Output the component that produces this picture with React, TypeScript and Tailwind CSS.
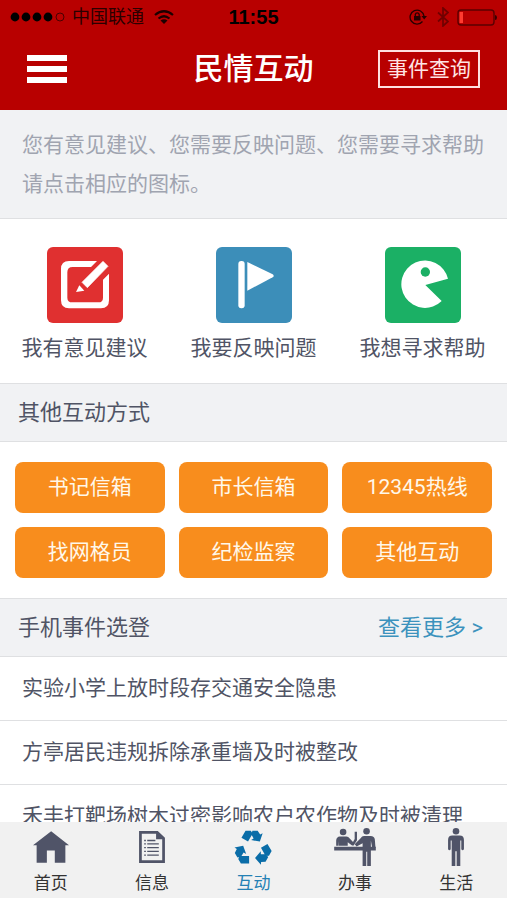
import type { ReactNode } from 'react'

const actions = [
    { label: '我有意见建议', icon: <EditIcon /> },
    { label: '我要反映问题', icon: <FlagIcon /> },
    { label: '我想寻求帮助', icon: <HelpIcon /> },
]

const channels = ['书记信箱', '市长信箱', '12345热线', '找网格员', '纪检监察', '其他互动']

const events = [
    '实验小学上放时段存交通安全隐患',
    '方亭居民违规拆除承重墙及时被整改',
    '禾丰打靶场树木过密影响农户农作物及时被清理',
]

const tabs = [
    { label: '首页', icon: <HomeIcon /> },
    { label: '信息', icon: <DocIcon /> },
    { label: '互动', icon: <RecycleIcon />, active: true },
    { label: '办事', icon: <ServiceIcon /> },
    { label: '生活', icon: <PersonIcon /> },
]

function EditIcon() {
    return (
        <svg viewBox="0 0 228 228" className="h-19 w-19 rounded-md bg-[#e03030]" aria-hidden="true">
            <path d="M150 42H66Q42 42 42 66V160Q42 184 66 184H162Q186 184 186 160V80L168 98V152Q168 166 154 166H76Q61 166 61 152V76Q61 60 77 60H132Z" fill="#fff" />
            <path d="M168 43L183 58L121 122L105 106Z" fill="#fff" stroke="#fff" strokeWidth="2" strokeLinejoin="round" />
            <path d="M97 115L112 131L87 135Z" fill="#fff" />
        </svg>
    )
}

function FlagIcon() {
    return (
        <svg viewBox="0 0 228 228" className="h-19 w-19 rounded-md bg-[#3c8eb9]" aria-hidden="true">
            <rect x="67" y="42" width="19" height="142" rx="9" fill="#fff" />
            <path d="M94 45L170 82Q176 87 170 91L94 131Z" fill="#fff" />
        </svg>
    )
}

function HelpIcon() {
    return (
        <svg viewBox="0 0 228 228" className="h-19 w-19 rounded-md bg-[#1bb065]" aria-hidden="true">
            <path d="M121 114L189 95A71 71 0 1 0 170 162Z" fill="#fff" />
            <circle cx="121" cy="75" r="14" fill="#1bb065" />
        </svg>
    )
}

function HomeIcon() {
    return (
        <svg viewBox="0 0 109 95" className="h-8 w-9" fill="currentColor" aria-hidden="true">
            <path d="M55 0L109 42H98V95H66V58H42V95H11V42H0Z" />
        </svg>
    )
}

function DocIcon() {
    return (
        <svg viewBox="0 0 76 94" className="h-8 w-[26px]" fill="currentColor" aria-hidden="true">
            <path fillRule="evenodd" d="M0 0H55L76 20V94H0ZM8 8V86H68V24H50V8Z" />
            <path d="M24 26H48V30H24ZM24 36H58V40H24ZM24 47H58V51H24ZM24 58H58V62H24ZM24 69H58V73H24Z" />
            <path d="M15 26H20V30H15ZM15 36H20V40H15ZM15 47H20V51H15ZM15 58H20V62H15ZM15 69H20V73H15Z" />
        </svg>
    )
}

// one folded arrow, turned around the centre three times
function RecycleIcon() {
    const arrow = 'M18 24L31 1H48L54 10L39 36ZM53 1H70L78 13L86 9L77 36L49 31L57 26L50 13Z'
    return (
        <svg viewBox="-6 0 122 110" className="h-[35px] w-[38px]" fill="currentColor" aria-hidden="true">
            <path d={arrow} />
            <path d={arrow} transform="rotate(120 54 58)" />
            <path d={arrow} transform="rotate(240 54 58)" />
        </svg>
    )
}

function ServiceIcon() {
    return (
        <svg viewBox="0 0 126 115" className="h-[38px] w-[42px]" fill="currentColor" aria-hidden="true">
            <circle cx="27" cy="12" r="10" />
            <path d="M17 26H37Q43 26 47 32L57 42L62 33V11H69V37L59 53H54L41 43V54H14V40L13 54H6V38Q7 27 17 26Z" />
            <path d="M0 57H126V68H0Z" />
            <circle cx="98" cy="10" r="10" />
            <path d="M90 24H110Q122 24 123 35L125 60H115L111 38V115H100V72H97V115H86V46L68 56L62 49L80 31Q84 24 90 24Z" />
        </svg>
    )
}

function PersonIcon() {
    return (
        <svg viewBox="0 0 48 115" className="h-[38px] w-4" fill="currentColor" aria-hidden="true">
            <circle cx="24" cy="10" r="10" />
            <path d="M13 23H35Q48 23 48 36V64Q44 70 40 64V38H37V115H26V70H22V115H11V38H8V64Q4 70 0 64V36Q0 23 13 23Z" />
        </svg>
    )
}

function StatusBar() {
    return (
        <div className="grid h-[34px] grid-cols-[1fr_auto_1fr] items-center px-[10px] text-black">
            <div className="flex items-center">
                <svg viewBox="0 0 56 10" className="h-[10px] w-14" aria-hidden="true">
                    <circle cx="5" cy="5" r="4.4" />
                    <circle cx="16" cy="5" r="4.4" />
                    <circle cx="27" cy="5" r="4.4" />
                    <circle cx="38" cy="5" r="4.4" />
                    <circle cx="50" cy="5" r="4" fill="none" stroke="#4a0000" />
                </svg>
                <span className="ml-[6px] text-lg text-[#2a0000]">中国联通</span>
                <svg viewBox="0 0 20 14" className="ml-[10px] h-[14px] w-5" fill="none" stroke="#1c0000" strokeWidth="2.2" aria-hidden="true">
                    <path d="M1 5Q10 -2.500 19 5M4.500 8.500Q10 4 15.500 8.500" />
                    <path d="M6.500 10.500Q10 8 13.500 10.500L10 14Z" fill="#1c0000" stroke="none" />
                </svg>
            </div>
            <span className="font-['Liberation_Sans',sans-serif] text-xl font-bold">11:55</span>
            <div className="flex items-center justify-end">
                <svg viewBox="0 0 18 16" className="h-4 w-[18px]" fill="none" stroke="#260000" strokeWidth="1.3" aria-hidden="true">
                    <path d="M13.500 12.500A7 7 0 1 1 15 7" />
                    <path d="M12.500 7H18L15.200 10.500Z" fill="#260000" stroke="none" />
                    <rect x="5" y="7" width="6.500" height="4.500" fill="#260000" stroke="none" />
                    <path d="M6.300 7V5.500A2 2 0 0 1 10.200 5.500V7" />
                </svg>
                <svg viewBox="0 0 12 20" className="ml-[10px] h-5 w-3" fill="none" stroke="#700000" strokeWidth="1.700" aria-hidden="true">
                    <path d="M1 5.500L11 14.500L6 19V1L11 5.500L1 14.500" />
                </svg>
                <svg viewBox="0 0 40 17" className="ml-2 h-[17px] w-10" aria-hidden="true">
                    <rect x="1" y="1" width="36" height="15" rx="3" fill="none" stroke="#5a0000" strokeWidth="1.400" />
                    <rect x="2.500" y="3" width="3.500" height="11" fill="#ff3b30" />
                    <path d="M38 6Q40 6 40 8.500Q40 11 38 11Z" fill="#3a0000" />
                </svg>
            </div>
        </div>
    )
}

function SectionHeading({ title, children }: { title: string; children?: ReactNode }) {
    return (
        <div className="flex h-[59px] shrink-0 items-center justify-between border-y border-[#dfe0e2] bg-[#f1f2f4] pr-6 pl-[18px] text-[22px]">
            <h2>{title}</h2>
            {children}
        </div>
    )
}

export default function App() {
    return (
        <div className="flex h-screen flex-col bg-white font-[Roboto,'Noto_Sans_CJK_SC',sans-serif] text-[#505465]">
            <header className="h-[110px] shrink-0 bg-[#b80000] text-white">
                <StatusBar />
                <div className="grid h-[70px] grid-cols-[1fr_auto_1fr] items-center px-[27px]">
                    <button type="button" aria-label="菜单" className="flex w-10 flex-col gap-[5px]">
                        <span className="h-[6px] bg-white" />
                        <span className="h-[6px] bg-white" />
                        <span className="h-[6px] bg-white" />
                    </button>
                    <h1 className="text-[30px] leading-9 font-medium">民情互动</h1>
                    <button type="button" className="h-[38px] justify-self-end border-2 border-[#ffe0e0] px-[7px] text-[21px] leading-8 text-[#ffe4e4]">
                        事件查询
                    </button>
                </div>
            </header>

            <main className="flex min-h-0 flex-1 flex-col overflow-hidden">
                <p className="shrink-0 bg-[#f1f2f4] pt-4 pb-[14px] pl-[22px] text-[21px] leading-[39px] text-[#a0a4b0]">
                    您有意见建议、您需要反映问题、您需要寻求帮助
                    <br />
                    请点击相应的图标。
                </p>

                {/* 三个主要入口 */}
                <div className="grid shrink-0 grid-cols-3 border-t border-[#dfe0e2] pt-7 pb-[19px]">
                    {actions.map((action) => (
                        <button type="button" key={action.label} className="flex flex-col items-center gap-[9px] text-[21px] leading-8">
                            {action.icon}
                            <span>{action.label}</span>
                        </button>
                    ))}
                </div>

                <SectionHeading title="其他互动方式" />
                <div className="grid shrink-0 grid-cols-3 gap-[14px] px-[15px] pt-5 pb-5">
                    {channels.map((channel) => (
                        <button type="button" key={channel} className="h-[51px] rounded-lg bg-[#f88d1d] text-[21px] text-[#fff8ea]">
                            {channel}
                        </button>
                    ))}
                </div>

                <SectionHeading title="手机事件选登">
                    <a href="#" className="text-[#3c92bd]">查看更多 &gt;</a>
                </SectionHeading>
                <ul className="shrink-0">
                    {events.map((event) => (
                        <li key={event} className="border-b border-[#dfe0e2]">
                            <a href="#" className="block pl-[22px] text-[21px] leading-[63px] whitespace-nowrap">{event}</a>
                        </li>
                    ))}
                </ul>
            </main>

            {/* 底部导航 */}
            <nav className="grid h-[78px] shrink-0 grid-cols-5 border-b-2 border-white bg-[#f1f1f1]">
                {tabs.map((tab) => (
                    <a
                        href="#"
                        key={tab.label}
                        className={`flex flex-col items-center pt-[6px] text-[17px] leading-6 ${tab.active ? 'text-[#0a6da8]' : 'text-[#505468]'}`}
                    >
                        <span className="flex h-[38px] items-center">{tab.icon}</span>
                        <span className={`mt-[5px] ${tab.active ? 'text-[#2480b4]' : 'text-[#333]'}`}>{tab.label}</span>
                    </a>
                ))}
            </nav>
        </div>
    )
}
